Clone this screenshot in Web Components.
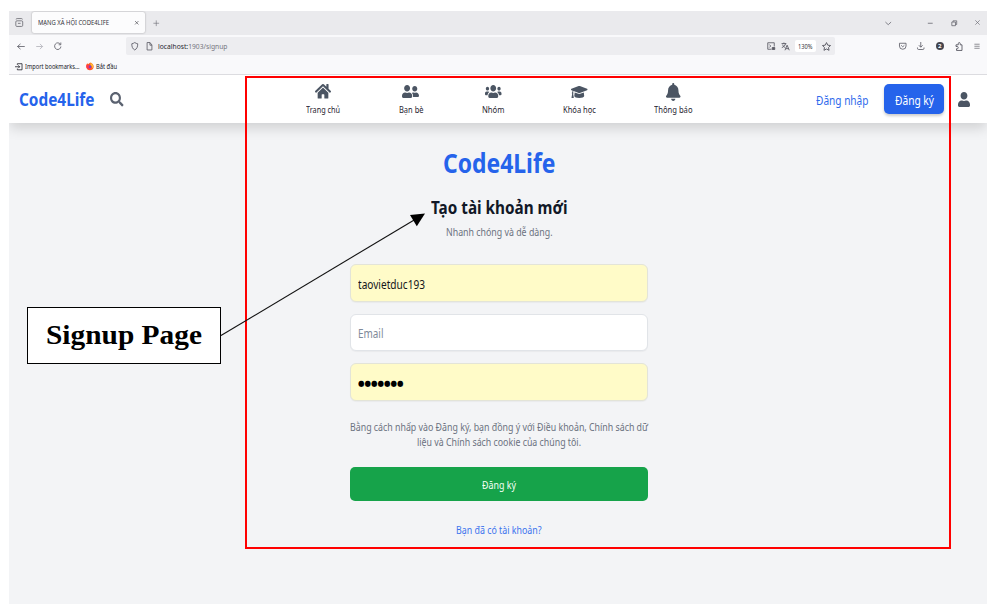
<!DOCTYPE html>
<html lang="vi">
<head>
<meta charset="utf-8">
<title>MẠNG XÃ HỘI CODE4LIFE</title>
<style>
html,body{margin:0;height:100%;overflow:hidden;background:#fff}
body{font-family:"Noto Sans","Open Sans",sans-serif}
</style>
</head>
<body>
<signup-slide></signup-slide>
<script>
/* One line of text fitted to an exact width: <fit-text w="71" size="7"> */
class FitText extends HTMLElement{
  connectedCallback(){
    if(this.shadowRoot)return;
    const s=this.attachShadow({mode:'open'});
    const w=+this.getAttribute('w'),z=this.getAttribute('size'),h=this.getAttribute('h')||Math.ceil(z*1.4);
    s.innerHTML=`<style>:host{display:block;flex:none;width:${w}px;height:${h}px;line-height:${h}px;font-size:${z}px;white-space:nowrap}
    span{display:inline-block;transform-origin:0 50%;vertical-align:top}</style><span><slot></slot></span>`;
    const t=s.querySelector('span');
    const n=t.getBoundingClientRect().width;
    if(n)t.style.transform=`scaleX(${w/n})`;
  }
}

const FILL={
 search:['0 0 512 512','M505 442.7L405.3 343c-4.5-4.5-10.6-7-17-7H372c27.6-35.3 44-79.7 44-128C416 93.1 322.9 0 208 0S0 93.1 0 208s93.1 208 208 208c48.3 0 92.7-16.4 128-44v16.3c0 6.4 2.5 12.5 7 17l99.7 99.7c9.4 9.4 24.6 9.4 33.9 0l28.3-28.3c9.4-9.4 9.4-24.6.1-34zM208 336c-70.7 0-128-57.2-128-128 0-70.7 57.2-128 128-128 70.7 0 128 57.2 128 128 0 70.7-57.2 128-128 128z'],
 home:['0 32 576 448','M280.37 148.26L96 300.11V464a16 16 0 0 0 16 16l112.06-.29a16 16 0 0 0 15.92-16V368a16 16 0 0 1 16-16h64a16 16 0 0 1 16 16v95.64a16 16 0 0 0 16 16.05L464 480a16 16 0 0 0 16-16V300L295.67 148.26a12.19 12.19 0 0 0-15.3 0zM571.6 251.47L488 182.56V44.05a12 12 0 0 0-12-12h-56a12 12 0 0 0-12 12v72.61L318.47 43a48 48 0 0 0-61 0L4.34 251.47a12 12 0 0 0-1.6 16.9l25.5 31A12 12 0 0 0 45.15 301l235.22-193.74a12.19 12.19 0 0 1 15.3 0L530.9 301a12 12 0 0 0 16.9-1.6l25.5-31a12 12 0 0 0-1.7-16.93z'],
 friends:['0 32 640 448','M192 256c61.9 0 112-50.1 112-112S253.9 32 192 32 80 82.1 80 144s50.1 112 112 112zm76.8 32h-8.3c-20.8 10-43.9 16-68.5 16s-47.6-6-68.5-16h-8.3C51.6 288 0 339.6 0 403.2V432c0 26.5 21.5 48 48 48h288c26.5 0 48-21.5 48-48v-28.8c0-63.6-51.6-115.2-115.2-115.2zM480 256c53 0 96-43 96-96s-43-96-96-96-96 43-96 96 43 96 96 96zm48 32h-3.8c-13.9 4.8-28.6 8-44.2 8s-30.3-3.2-44.2-8H432c-20.4 0-39.2 5.9-55.7 15.4 24.4 26.3 39.7 61.2 39.7 99.8v38.4c0 2.2-.5 4.3-.6 6.4H592c26.5 0 48-21.5 48-48 0-61.9-50.1-112-112-112z'],
 users:['0 32 640 448','M96 224c35.3 0 64-28.7 64-64s-28.7-64-64-64-64 28.7-64 64 28.7 64 64 64zm448 0c35.3 0 64-28.7 64-64s-28.7-64-64-64-64 28.7-64 64 28.7 64 64 64zm32 32h-64c-17.6 0-33.5 7.1-45.1 18.6 40.3 22.1 68.9 62 75.1 109.4h66c17.7 0 32-14.3 32-32v-32c0-35.3-28.7-64-64-64zm-256 0c61.9 0 112-50.1 112-112S381.9 32 320 32 208 82.1 208 144s50.1 112 112 112zm76.8 32h-8.3c-20.8 10-43.9 16-68.5 16s-47.6-6-68.5-16h-8.3C179.6 288 128 339.6 128 403.2V432c0 26.5 21.5 48 48 48h288c26.5 0 48-21.5 48-48v-28.8c0-63.6-51.6-115.2-115.2-115.2zm-223.7-13.4C161.5 263.1 145.6 256 128 256H64c-35.3 0-64 28.7-64 64v32c0 17.7 14.3 32 32 32h65.9c6.3-47.4 34.9-87.3 75.2-109.4z'],
 cap:['0 64 640 384','M622.34 153.2L343.4 67.5c-15.2-4.67-31.6-4.67-46.79 0L17.66 153.2c-23.54 7.23-23.54 38.36 0 45.59l48.63 14.94c-10.67 13.19-17.23 29.28-17.88 46.9C38.78 266.15 32 276.11 32 288c0 10.78 5.68 19.85 13.86 25.65L20.33 428.53C18.11 438.52 25.71 448 35.94 448h56.11c10.24 0 17.84-9.48 15.62-19.47L82.14 313.65C90.32 307.85 96 298.78 96 288c0-11.57-6.47-21.25-15.66-26.87.76-15.02 8.44-28.3 20.69-36.72L296.6 284.5c9.06 2.78 26.44 6.25 46.79 0l278.95-85.7c23.55-7.24 23.55-38.36 0-45.6zM352.79 315.09c-28.53 8.76-52.84 3.92-65.59 0l-145.02-44.55L128 384c0 35.35 85.96 64 192 64s192-28.65 192-64l-14.18-113.47-145.03 44.56z'],
 bell:['0 0 448 512','M224 512c35.32 0 63.97-28.65 63.97-64H160.03c0 35.35 28.65 64 63.97 64zm215.39-149.71c-19.32-20.76-55.47-51.99-55.47-154.29 0-77.7-54.48-139.9-127.94-155.16V32c0-17.67-14.32-32-31.98-32s-31.98 14.33-31.98 32v20.84C118.56 68.1 64.08 130.3 64.08 208c0 102.3-36.15 133.53-55.47 154.29-6 6.45-8.66 14.16-8.61 21.71.11 16.4 12.98 32 32.1 32h383.8c19.12 0 32-15.6 32.1-32 .05-7.55-2.61-15.27-8.61-21.71z'],
 user:['0 0 448 512','M224 256c70.7 0 128-57.3 128-128S294.7 0 224 0 96 57.3 96 128s57.3 128 128 128zm89.6 32h-16.7c-22.2 10.2-46.9 16-72.9 16s-50.6-5.8-72.9-16h-16.7C60.2 288 0 348.2 0 422.4V464c0 26.5 21.5 48 48 48h352c26.5 0 48-21.5 48-48v-41.6c0-74.2-60.2-134.4-134.4-134.4z']
};
/* Browser glyphs, stroked in a 16x16 box */
const LINE={
 view:'<rect x="1.5" y="5" width="13" height="10" rx="2"/><path d="M2 2.500Q2 1 4 1h8q2 0 2 1.500M5.500 9.500h5"/>',
 close:'<path d="M3 3l10 10M13 3L3 13"/>',
 plus:'<path d="M8 1v14M1 8h14"/>',
 chev:'<path d="M1 5l7 6.500L15 5"/>',
 min:'<path d="M2 8h12"/>',
 restore:'<path d="M2 5h9v9H2zM5 5V2h9v9h-3"/>',
 back:'<path d="M15.500 8H1M7 2L1 8l6 6"/>',
 fwd:'<path d="M.5 8H15M9 2l6 6-6 6"/>',
 reload:'<path d="M13.500 4.500A6.700 6.700 0 1 0 14.700 9M14.500 1v4.500H10"/>',
 shield:'<path d="M8 1C6 2.300 4 3 1.700 3.300 1.500 9 3.500 13 8 15c4.500-2 6.500-6 6.300-11.700C12 3 10 2.300 8 1z"/>',
 doc:'<path d="M2.500 1H9l4.500 4.500V15h-11zM9 1v5h4.500"/>',
 frame:'<path d="M9 14.500H1.500v-13h13V9M4.500 5l3 3-3 3"/><rect x="10.500" y="11" width="5" height="4" fill="currentColor"/>',
 lang:'<path d="M1 3h9M5.500 1v2M8.500 3C8 7 4.500 9.500 1.500 10.500M3 5c1 3 3 4.500 5 5.500M7.500 15.500L11.500 6l4 9.500M9 12.500h5"/>',
 star:'<path d="M8 1l2.200 4.600 5 .7-3.600 3.500.9 5L8 12.400l-4.500 2.400.9-5L.8 6.300l5-.7z"/>',
 pocket:'<path d="M1 2.500h14V8a7 6.500 0 0 1-14 0zM4.500 6.500L8 9.700l3.500-3.200"/>',
 down:'<path d="M8 0v10M4 6.500L8 10.500l4-4M1 11v1.500Q1 15 3.500 15h9Q15 15 15 12.500V11"/>',
 puzzle:'<path d="M2 5h4.500V3a2 2 0 0 1 4 0v2H14v10H3v-3h1.500a2 2 0 0 0 0-4H2z"/>',
 menu:'<path d="M1 3h14M1 8h14M1 13h14"/>',
 imp:'<path d="M5 4V1.500h10v13H5V12M0 8h10M7 5l3 3-3 3"/>'
};
class AppIcon extends HTMLElement{
  connectedCallback(){
    if(this.shadowRoot)return;
    const n=this.getAttribute('name'),w=this.getAttribute('w'),h=this.getAttribute('h')||w,f=FILL[n];
    const sw=this.getAttribute('sw')||1.7;
    this.attachShadow({mode:'open'}).innerHTML=`<style>:host{display:block;flex:none;width:${w}px;height:${h}px}svg{display:block;width:100%;height:100%;overflow:visible}</style>`+
     (f?`<svg viewBox="${f[0]}" preserveAspectRatio="none"><path fill="currentColor" d="${f[1]}"/></svg>`
       :`<svg viewBox="0 0 16 16" preserveAspectRatio="none" fill="none" stroke="currentColor" stroke-width="${sw}" stroke-linejoin="round">${LINE[n]}</svg>`);
  }
}

const define=(tag,html)=>customElements.define(tag,class extends HTMLElement{
  connectedCallback(){ if(!this.shadowRoot)this.attachShadow({mode:'open'}).innerHTML=html; }
});

customElements.define('fit-text',FitText);
customElements.define('app-icon',AppIcon);

define('browser-tabs',`<style>
:host{display:flex;align-items:center;height:23.500px;background:#eaeaed;color:#6a6a72;box-sizing:border-box;padding-left:5.500px}
.tab{display:flex;align-items:center;box-sizing:border-box;width:113px;height:21px;margin-left:9px;padding-left:5.500px;background:#fcfcfd;border-radius:2px;box-shadow:0 0 2px #0005;color:#33333b}
.tab app-icon{margin-left:25.500px}
.plus{margin-left:7.500px}.win{display:flex;align-items:center;margin-left:auto;padding-right:6.500px}
</style>
<app-icon name="view" w="8.500" h="9" sw="1.500"></app-icon>
<div class="tab"><fit-text w="71" size="7.200">MẠNG XÃ HỘI CODE4LIFE</fit-text><app-icon name="close" w="5.500"></app-icon></div>
<app-icon class="plus" name="plus" w="6.500" sw="1.500"></app-icon>
<div class="win"><app-icon name="chev" w="6.500" sw="2"></app-icon><app-icon name="min" w="6.500" sw="2" style="margin-left:36px"></app-icon><app-icon name="restore" w="6.500" style="margin-left:17.500px" sw="2"></app-icon><app-icon name="close" w="7" style="margin-left:16px" sw="1.500"></app-icon></div>`);

define('browser-toolbar',`<style>
:host{display:flex;align-items:center;height:23px;background:#f9f9fb;color:#5a5a64;box-sizing:border-box;padding:0 7px 0 7.500px}
.field{display:flex;align-items:center;box-sizing:border-box;width:709px;height:18.500px;margin-left:65px;padding:0 4px 0 5px;background:#ededf0;border-radius:2px}
.url{margin-left:5.500px;padding-top:1px;color:#77777f}b{font-weight:400;color:#26262e}
.zoom{display:flex;justify-content:center;align-items:center;width:21px;height:11.500px;margin:0 6px;background:#fff;border-radius:2px;color:#33333b}
.end{margin-left:auto}
.badge{display:flex;align-items:center;justify-content:center;width:8px;height:8.500px;margin:0 11px 0 11.500px;border-radius:50%;background:#45454e;color:#fff;font-weight:700}
</style>
<app-icon name="back" w="8" h="7"></app-icon><app-icon name="fwd" w="7" style="margin-left:11px;color:#aaaab2"></app-icon><app-icon name="reload" w="7.500" h="8" style="margin-left:11px"></app-icon>
<div class="field"><app-icon name="shield" w="7.500" h="8.500"></app-icon><app-icon name="doc" w="7" h="8.500" style="margin-left:7px"></app-icon>
<fit-text class="url" w="69.500" size="7.600"><b>localhost:</b>1903/signup</fit-text>
<app-icon class="end" name="frame" w="8"></app-icon><app-icon name="lang" w="8.500" style="margin-left:6px"></app-icon>
<span class="zoom"><fit-text w="14.500" size="6.500" style="padding-top:1px">130%</fit-text></span><app-icon name="star" w="9"></app-icon></div>
<app-icon class="end" name="pocket" w="7.500" h="8"></app-icon><app-icon name="down" w="7.500" h="8" style="margin-left:10.500px"></app-icon>
<span class="badge"><fit-text w="3.500" size="6" h="8">2</fit-text></span>
<app-icon name="puzzle" w="8" h="9"></app-icon><app-icon name="menu" w="6" h="6.500" style="margin-left:11px"></app-icon>`);

define('bookmarks-bar',`<style>
:host{display:flex;align-items:center;height:17.500px;background:#f9f9fb;border-bottom:1px solid #dcdce0;box-sizing:border-box;padding:1px 0 0 6px;color:#202028}
svg{width:8px;height:8.500px;margin:0 2px 0 6px}
fit-text{padding-top:1px}
</style>
<app-icon name="imp" w="7.500" h="7.500"></app-icon><fit-text w="54.500" size="7" style="margin-left:2.500px">Import bookmarks...</fit-text>
<svg viewBox="0 0 16 16"><path fill="#ff5722" d="M8 1c3 0 4 1 5 2.500 2 2 3 5 1.800 8C13.500 14.500 11 16 8 16c-4 0-7-2.500-7.500-6.500C.2 6 1 4 2.500 2L4 4z"/><path fill="#ffc02e" d="M9 0c1 2 4 3 5 6s-.5 6-3 7c2-3 1-6-2-7z"/><circle cx="7.500" cy="9" r="3.200" fill="#7542c9"/><path fill="#ff3750" d="M1 6c2-1 5 0 6 2-2 0-2 2-1 3 2 1 4 0 5-1-1 4-5 5-7.500 3.500S0 9 1 6z"/></svg>
<fit-text w="21" size="7">Bắt đầu</fit-text>`);

define('nav-item',`<style>
:host{display:flex;flex-direction:column;align-items:center;flex:none;color:#4b5563}
.pic{display:flex;align-items:center;height:19px}.cap{color:#1f2430}
</style><div class="pic"><slot name="icon"></slot></div><div class="cap"><slot></slot></div>`);

define('site-header',`<style>
:host{display:flex;align-items:center;position:relative;height:48px;background:#fff;box-shadow:0 6px 12px -1px #00000026;clip-path:inset(0 0 -24px 0);box-sizing:border-box;padding:0 17px 0 9.500px;color:#4b5563}
.logo{color:#2563eb;font-weight:700}
nav{display:flex;gap:58.500px;align-self:flex-start;margin-left:182.500px;padding-top:7px}
.login{margin-left:auto;color:#2f6aec}
.btn{display:flex;align-items:center;justify-content:center;width:60px;height:30.500px;margin:0 14px 0 15.500px;border-radius:5px;background:#2563eb;color:#fff;box-shadow:0 2px 3px #0003}
</style>
<fit-text class="logo" w="75.500" size="17.200" h="24" style="padding-top:2px">Code4Life</fit-text>
<app-icon name="search" w="13.500" h="14.500" style="margin-left:16px;color:#5b6270"></app-icon>
<nav>
<nav-item><app-icon slot="icon" name="home" w="16" h="14.500"></app-icon><fit-text w="34" size="8.800" h="18">Trang chủ</fit-text></nav-item>
<nav-item><app-icon slot="icon" name="friends" w="17" h="13"></app-icon><fit-text w="24.500" size="8.800" h="18">Bạn bè</fit-text></nav-item>
<nav-item><app-icon slot="icon" name="users" w="16.500" h="13"></app-icon><fit-text w="22.500" size="8.800" h="18">Nhóm</fit-text></nav-item>
<nav-item><app-icon slot="icon" name="cap" w="16.500" h="12"></app-icon><fit-text w="33" size="8.800" h="18">Khóa học</fit-text></nav-item>
<nav-item><app-icon slot="icon" name="bell" w="14.500" h="18"></app-icon><fit-text w="38.500" size="8.800" h="18">Thông báo</fit-text></nav-item>
</nav>
<fit-text class="login" w="52.500" size="11.700" h="18" style="padding-top:1px">Đăng nhập</fit-text>
<div class="btn"><fit-text w="39" size="11.700" h="18" style="padding-top:1px">Đăng ký</fit-text></div>
<app-icon name="user" w="12" h="15"></app-icon>`);

define('text-field',`<style>
:host{display:flex;align-items:center;box-sizing:border-box;height:37.500px;padding:2px 0 0 7.500px;border:1px solid #e1e4e8;border-radius:6px;background:#fff;color:#7f8a9a;box-shadow:0 1px 1px #0000000a}
:host([filled]){background:#fffbc8;color:#14161a;border-color:#e3e4d8}
</style><slot></slot>`);

define('signup-form',`<style>
:host{display:flex;flex-direction:column;align-items:center;width:298px;margin:0 0 0 341px;padding-top:21.500px}
.logo{color:#2563eb;font-weight:700}.title{color:#111827;font-weight:700;margin-top:15px}
.sub{color:#6b7280;margin-top:4.500px}
.fields{display:grid;gap:12px;width:100%;margin-top:24px}
.fields fit-text{margin-left:-.5px}
.terms{display:flex;flex-direction:column;align-items:center;margin-top:19px;color:#6b7280}
.go{display:flex;align-items:center;justify-content:center;width:100%;height:34px;margin-top:17.500px;border-radius:5px;background:#16a34a;color:#f3fff7}
.go fit-text{padding-top:2px}
.have{margin-top:22px;color:#3b73ee}
</style>
<fit-text class="logo" w="112.500" size="26" h="36">Code4Life</fit-text>
<fit-text class="title" w="136.500" size="17" h="24">Tạo tài khoản mới</fit-text>
<fit-text class="sub" w="106.500" size="10" h="16">Nhanh chóng và dễ dàng.</fit-text>
<div class="fields">
<text-field filled><fit-text w="67" size="11.700" h="18">taovietduc193</fit-text></text-field>
<text-field><fit-text w="25.500" size="11.700" h="18">Email</fit-text></text-field>
<text-field filled><fit-text w="45.500" size="8.400" h="18" style="font-family:'DejaVu Sans',sans-serif;color:#000;padding-top:1px">●●●●●●●</fit-text></text-field>
</div>
<div class="terms"><fit-text w="298" size="10" h="15">Bằng cách nhấp vào Đăng ký, bạn đồng ý với Điều khoản, Chính sách dữ</fit-text>
<fit-text w="164" size="10" h="15">liệu và Chính sách cookie của chúng tôi.</fit-text></div>
<div class="go"><fit-text w="34" size="10" h="15">Đăng ký</fit-text></div>
<fit-text class="have" w="85.500" size="10" h="15">Bạn đã có tài khoản?</fit-text>`);

/* Annotations laid over the browser window */
define('callout-layer',`<style>
:host{position:absolute;inset:0;display:block}
.frame{position:absolute;box-sizing:border-box;left:245px;top:76px;width:706px;height:473px;border:2px solid #f00}
.label{position:absolute;box-sizing:border-box;left:27px;top:307px;width:194px;height:57px;border:1px solid #000;background:#fff;display:flex;align-items:center;justify-content:center;padding-bottom:2px;font-family:"Liberation Serif",serif;font-weight:700;color:#000}
svg{position:absolute;inset:0}
</style>
<div class="frame"></div>
<svg width="994" height="612"><path d="M221 335.500L415 219.500" stroke="#111" stroke-width="1.100"/><path d="M425 213.500L410 215l6.800 11.300z"/></svg>
<div class="label"><fit-text w="156" size="28" h="34">Signup Page</fit-text></div>`);

define('signup-slide',`<style>
:host{display:block;position:relative;width:994px;height:612px;box-sizing:border-box;padding:11px 7px 8px 9px;background:#fff}
.window{height:593px;background:#f3f4f6;overflow:hidden}
</style>
<div class="window"><browser-tabs></browser-tabs><browser-toolbar></browser-toolbar><bookmarks-bar></bookmarks-bar><site-header></site-header><signup-form></signup-form></div>
<callout-layer></callout-layer>`);
</script>
</body>
</html>
